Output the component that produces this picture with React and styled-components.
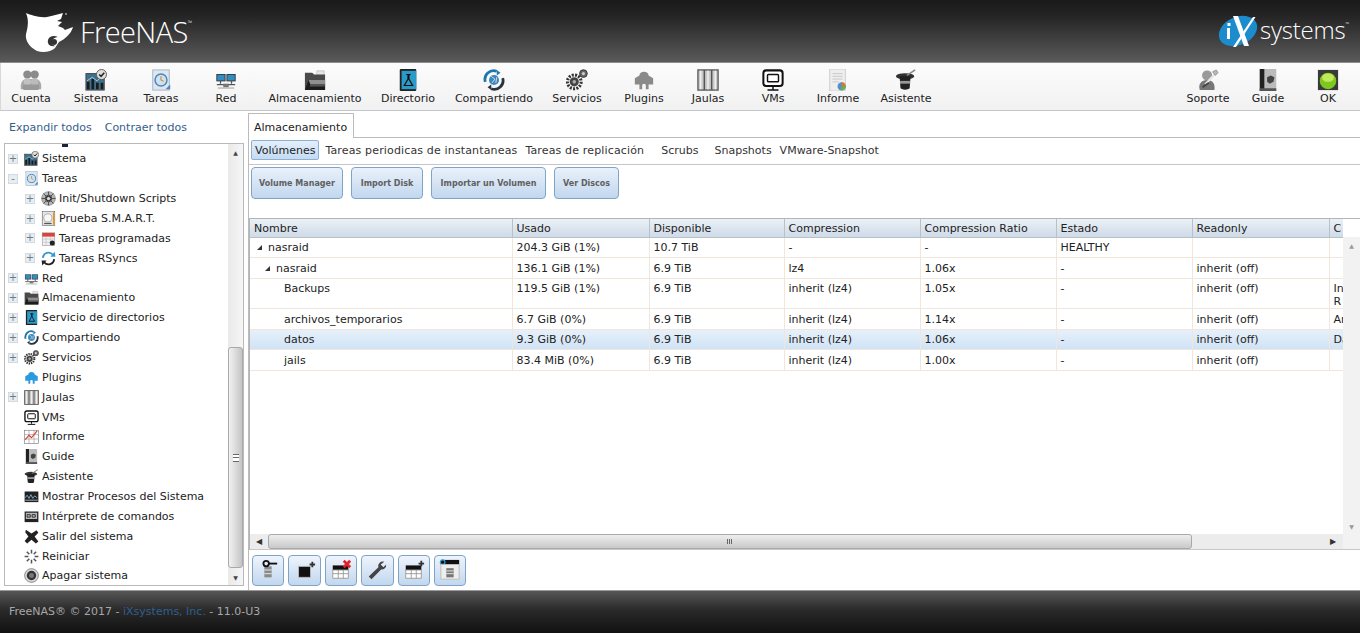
import React from "react";
import styled, { createGlobalStyle } from "styled-components";

const GlobalStyle = createGlobalStyle`
  html, body {
    margin: 0;
    padding: 0;
    height: 100%;
    overflow: hidden;
    background: #fff;
  }
  body {
    font-family: "DejaVu Sans", Verdana, sans-serif;
    font-size: 11px;
    color: #222;
  }
  #root { height: 100%; }
`;

// icons
const icons = {
  cuenta: (
    <>
      <circle cx="8" cy="6" r="4.5" fill="#8b8b8b" />
      <circle cx="16" cy="6" r="4.5" fill="#8b8b8b" />
      <path d="M1 22c-1-7 2-11 6-11h10c4 0 7 4 6 11z" fill="#a8a8a8" />
      <circle cx="8" cy="14" r="4" fill="#c2c2c2" />
      <circle cx="16" cy="14" r="4" fill="#bbb" />
      <rect x="3" y="17" width="18" height="6" rx="2" fill="#999" />
    </>
  ),
  sistema: (
    <>
      <rect x="1" y="5" width="20" height="18" fill="#3f6f8c" stroke="#444" />
      <path d="M2 22V14h3v8zM7 22V11h3v11zM12 22v-7h3v7zM17 22V15h3v7z" fill="#1c1c1c" />
      <path d="M2 13l6-4 5 4 7-6" stroke="#9fd3ea" fill="none" />
      <circle cx="18" cy="6" r="5.5" fill="#ddd" stroke="#555" />
      <path d="M15.5 6l2 2 3.5-4" stroke="#222" strokeWidth="1.6" fill="none" />
    </>
  ),
  tareas: (
    <>
      <rect x="3" y="1" width="18" height="22" fill="#dfe6ee" stroke="#9fb4c8" />
      <circle cx="12" cy="12" r="6.5" fill="#cfe2f2" stroke="#4f86b8" strokeWidth="1.6" />
      <path d="M12 8v4l3 1.5" stroke="#d08a2c" strokeWidth="1.2" fill="none" />
      <path d="M17 22l5-5v5z" fill="#4f86b8" />
    </>
  ),
  red: (
    <>
      <rect x="2" y="6" width="9" height="7" fill="#2f8fc4" stroke="#333" />
      <rect x="13" y="6" width="9" height="7" fill="#2f8fc4" stroke="#333" />
      <path d="M6 13v3M18 13v3M2 17h20" stroke="#555" strokeWidth="1.4" />
      <rect x="9" y="16" width="6" height="4" fill="#777" />
      <rect x="3" y="20" width="18" height="1.6" fill="#bbb" />
    </>
  ),
  almacenamiento: (
    <>
      <path d="M14 2h8v5h-8z" fill="#e6e6e6" stroke="#aaa" strokeWidth=".6" />
      <path d="M1 4h8l2 2h12v17H1z" fill="#4a4a4a" />
      <path d="M1 23l4-11h18v11z" fill="#1c1c1c" />
      <path d="M5 12h18v5H7z" fill="#8f8f8f" />
      <path d="M7 17h16v2H6z" fill="#555" />
    </>
  ),
  directorio: (
    <>
      <rect x="3" y="0" width="18" height="24" rx="1" fill="#222" />
      <rect x="5" y="2" width="16" height="20" fill="#2a9ac8" />
      <path d="M10 6h5M12 6v5l-4 7h9l-4-7V6" stroke="#111" strokeWidth="1.3" fill="none" />
    </>
  ),
  compartiendo: (
    <>
      <circle cx="12" cy="12" r="5.5" fill="#3f86bd" />
      <path d="M9 8l4 3-3 4M15 9l-1 6" stroke="#d8e8f2" fill="none" />
      <path d="M2.500 14A9.500 9.500 0 0 1 15 2.500" fill="none" stroke="#1b78ac" strokeWidth="3" />
      <path d="M15 1l4 3-4 3z" fill="#1b78ac" />
      <path d="M21.500 10A9.500 9.500 0 0 1 9 21.500" fill="none" stroke="#26343d" strokeWidth="3" />
      <path d="M9 23l-4-3 4-3z" fill="#26343d" />
    </>
  ),
  servicios: (
    <>
      <circle cx="9" cy="14" r="7.5" fill="none" stroke="#333" strokeWidth="3.4" strokeDasharray="2.2 1.4" />
      <circle cx="9" cy="14" r="5" fill="#444" />
      <circle cx="9" cy="14" r="2" fill="#aaa" />
      <circle cx="19" cy="5" r="4.2" fill="#666" stroke="#333" />
      <circle cx="19" cy="5" r="1.7" fill="#ccc" />
    </>
  ),
  plugins: (
    <path d="M7 7a5 4 0 0 1 10 0l5 3v7h-5v5h-3v-4a2 2 0 0 0-4 0v4H7v-5H2v-7z" fill="currentColor" />
  ),
  jaulas: (
    <>
      <rect x="1" y="1" width="22" height="22" fill="#c9c9c9" stroke="#555" strokeWidth="1.4" />
      <path d="M8 1v22M16 1v22" stroke="#555" strokeWidth="1.6" />
      <path d="M4 2v20M12 2v20M20 2v20" stroke="#efefef" strokeWidth="1.6" />
    </>
  ),
  vms: (
    <>
      <rect x="1.5" y="1.5" width="21" height="17" rx="3" fill="#fff" stroke="#111" strokeWidth="2.2" />
      <rect x="6" y="6" width="12" height="8" rx="1" fill="#fff" stroke="#111" strokeWidth="1.6" />
      <path d="M12 19v3M6 23h12" stroke="#111" strokeWidth="1.6" />
    </>
  ),
  informe: (
    <>
      <rect x="3" y="0" width="17" height="24" fill="#eeeeee" stroke="#ccc" />
      <path d="M6 5h11M6 8h11M6 11h11M6 14h7" stroke="#c7c7c7" />
      <circle cx="16" cy="19" r="4.5" fill="#4f92c8" />
      <path d="M16 19v-4.5a4.5 4.5 0 0 1 4.5 4.5z" fill="#e0782a" />
      <path d="M16 19h4.5a4.5 4.5 0 0 1-6 4z" fill="#6bb04a" />
    </>
  ),
  informeTree: (
    <>
      <rect x="1" y="2" width="22" height="21" fill="#fff" stroke="#777" />
      <path d="M1 9h22M1 16h22M8 2v21M16 2v21" stroke="#999" />
      <path d="M2 17l6-7 4 4 9-11" stroke="#d8362c" strokeWidth="1.8" fill="none" />
    </>
  ),
  asistente: (
    <>
      <ellipse cx="11" cy="8" rx="10" ry="3.500" fill="#333" />
      <path d="M5 8h12l-1 13c-2 2-8 2-10 0z" fill="#222" />
      <rect x="5.500" y="13" width="11" height="3" fill="#999" />
      <path d="M13 7l9-6" stroke="#888" strokeWidth="1.800" />
    </>
  ),
  soporte: (
    <>
      <circle cx="11" cy="7" r="5.500" fill="#9a9a9a" />
      <path d="M3 23c-2-7 2-11 8-11s9 4 8 11z" fill="#777" />
      <path d="M9 17l11-12" stroke="#e6e6e6" strokeWidth="2.400" />
      <path d="M17 3l4-2 2 3-3 3z" fill="#bbb" stroke="#666" strokeWidth=".6" />
      <path d="M6 20l7-5" stroke="#444" strokeWidth="2" />
    </>
  ),
  guide: (
    <>
      <rect x="3" y="0" width="18" height="24" fill="#bbb" />
      <rect x="3" y="0" width="5" height="24" fill="#222" />
      <rect x="3" y="21" width="18" height="3" fill="#555" />
      <path d="M11 9l4-2 4 2-1 5-4 2-3-2z" fill="#444" />
    </>
  ),
  ok: (
    <>
      <rect x="1" y="1" width="22" height="22" fill="#3a3a3a" />
      <circle cx="12" cy="13" r="9" fill="#7cc820" />
      <ellipse cx="12" cy="9.500" rx="6.500" ry="4.500" fill="#c0ea5c" />
    </>
  ),
  init: (
    <>
      <circle cx="12" cy="12" r="11" fill="#b5b5b5" stroke="#777" />
      <circle cx="12" cy="12" r="5.500" fill="#333" />
      <path d="M12 1v22M1 12h22M4 4l16 16M20 4L4 20" stroke="#555" strokeWidth="1.600" />
      <circle cx="12" cy="12" r="2.500" fill="#ddd" />
    </>
  ),
  smart: (
    <>
      <rect x="2" y="1" width="20" height="22" fill="#e8e8e8" stroke="#666" />
      <circle cx="11" cy="11" r="6.500" fill="#f8f8f8" stroke="#888" />
      <rect x="19" y="2" width="3" height="20" fill="#d99a3c" />
      <rect x="5" y="19" width="12" height="2" fill="#555" />
    </>
  ),
  programadas: (
    <>
      <rect x="2" y="3" width="20" height="20" fill="#f2f2f2" stroke="#999" />
      <rect x="2" y="3" width="20" height="6" fill="#d8453a" />
      <path d="M2 13h20M2 18h20M8 9v14M15 9v14" stroke="#bbb" />
      <circle cx="18" cy="19" r="4" fill="#222" />
    </>
  ),
  rsync: (
    <>
      <path d="M3 11A9 9 0 0 1 19 6" fill="none" stroke="#2f9ad6" strokeWidth="3" />
      <path d="M15 9l8 0-1-8z" fill="#2f9ad6" />
      <path d="M21 13A9 9 0 0 1 5 18" fill="none" stroke="#222" strokeWidth="3" />
      <path d="M9 15l-8 0 1 8z" fill="#222" />
    </>
  ),
  procesos: (
    <>
      <rect x="1" y="4" width="22" height="17" fill="#222" />
      <path d="M2 14l3-4 3 5 3-6 3 6 3-4 4 3" stroke="#7fb8d8" strokeWidth="1.400" fill="none" />
      <rect x="2" y="17" width="20" height="2" fill="#888" />
    </>
  ),
  shell: (
    <>
      <rect x="1" y="4" width="22" height="17" fill="#222" />
      <rect x="3" y="6" width="18" height="10" fill="#bbb" />
      <path d="M5 9h5v4H5zM13 9h5v4h-5z" fill="none" stroke="#222" strokeWidth="1.400" />
    </>
  ),
  salir: (
    <path d="M3 1l9 6 8-5 3 4-6 6 6 8-4 3-7-6-7 6-4-4 6-7-5-7z" fill="#222" />
  ),
  reiniciar: (
    <g stroke="#555" strokeWidth="2.400">
      <path d="M12 1v6M12 17v6M1 12h6M17 12h6M4.500 4.500l4 4M15.500 15.500l4 4M19.500 4.500l-4 4M8.500 15.500l-4 4" />
    </g>
  ),
  apagar: (
    <>
      <circle cx="12" cy="12" r="11" fill="#d8d8d8" stroke="#555" />
      <circle cx="12" cy="12" r="7.500" fill="#333" />
      <circle cx="12" cy="12" r="4" fill="#777" />
    </>
  ),
};

const Icon = ({ name, size = 22, color }) => (
  <svg width={size} height={size} viewBox="0 0 24 24" color={color}>
    {icons[name]}
  </svg>
);

// small icons in the bottom button row
const actionIcons = [
  <>
    <path d="M8 8h8v12H8z" fill="#8a8a8a" />
    <path d="M8 12h8M8 16h8" stroke="#eee" />
    <circle cx="10" cy="5" r="3" fill="none" stroke="#111" strokeWidth="2" />
    <path d="M13 5h9" stroke="#111" strokeWidth="2" />
  </>,
  <>
    <rect x="5" y="8" width="13" height="12" fill="#111" stroke="#bbb" />
    <path d="M17 6h6M20 3v6" stroke="#333" strokeWidth="2" />
  </>,
  <>
    <rect x="3" y="7" width="17" height="5" fill="#111" />
    <path d="M3 12h17v9H3zM3 16h17M9 12v9M14.500 12v9" fill="#fff" stroke="#999" />
    <path d="M15 2l7 7M22 2l-7 7" stroke="#e0202a" strokeWidth="3" />
  </>,
  <path d="M20 3a5 5 0 0 0-6.500 6L3 19l3 3 10.500-10.500A5 5 0 0 0 22 6l-3 3-3-3z" fill="#444" />,
  <>
    <rect x="3" y="7" width="17" height="5" fill="#111" />
    <path d="M3 12h17v9H3zM3 16h17M9 12v9M14.500 12v9" fill="#fff" stroke="#999" />
    <path d="M17 5h6M20 2v6" stroke="#333" strokeWidth="2" />
  </>,
  <>
    <rect x="2" y="1" width="20" height="5" fill="#111" />
    <circle cx="4" cy="3.500" r="2.500" fill="none" stroke="#2f9ad6" strokeWidth="1.400" />
    <path d="M2 6h20v16H2z" fill="#eee" stroke="#bbb" />
    <path d="M8 10h8v10H8z" fill="#777" />
    <path d="M8 13h8M8 16h8" stroke="#eee" />
  </>,
];

const FreeNasLogo = () => (
  <svg width="49" height="41" viewBox="0 0 49 41">
    <path
      fill="#fff"
      d="M1 1C6 3 14 6 22 5c6-1 11-3 16-4l-2 6-4 2 5 1-4 4 5 2 2 2 8-3c-2 7-8 12-14 15l-4 6c-4 4-12 5-18 3C4 35 0 28 1 22 3 15 4 8 1 1z"
    />
    <path fill="#343434" d="M33 25c-4-2-9-1-10 3-1 4 2 7 7 6-3-1-4-3-3-5 1-3 4-4 6-4z" />
    <circle cx="29" cy="30" r="3" fill="#343434" />
    <circle cx="41" cy="2" r="1" fill="#aaa" />
  </svg>
);

const IxLogo = () => (
  <svg width="40" height="34" viewBox="0 0 40 34">
    <ellipse cx="20" cy="17" rx="20" ry="14" fill="#1c8ccd" transform="rotate(-24 20 17)" />
    <path d="M15 2h5l11 30h-5z" fill="#fff" />
    <path d="M35 3h2.500L18 33h-3z" fill="#fff" />
    <path d="M9 14h3v11H9zM9.500 9h3v3h-3z" fill="#fff" />
  </svg>
);

// toolbar data, the widths are what the original buttons measure
const leftTools = [
  ["cuenta", "Cuenta", 65],
  ["sistema", "Sistema", 65],
  ["tareas", "Tareas", 65],
  ["red", "Red", 65],
  ["almacenamiento", "Almacenamiento", 113],
  ["directorio", "Directorio", 73],
  ["compartiendo", "Compartiendo", 99],
  ["servicios", "Servicios", 67],
  ["plugins", "Plugins", 67],
  ["jaulas", "Jaulas", 61],
  ["vms", "VMs", 69],
  ["informe", "Informe", 61],
  ["asistente", "Asistente", 75],
];

const rightTools = [
  ["soporte", "Soporte", 60],
  ["guide", "Guide", 60],
  ["ok", "OK", 60],
];

const treeRows = [
  { icon: "sistema", label: "Sistema", exp: "+" },
  { icon: "tareas", label: "Tareas", exp: "-" },
  { icon: "init", label: "Init/Shutdown Scripts", exp: "+", sub: true },
  { icon: "smart", label: "Prueba S.M.A.R.T.", exp: "+", sub: true },
  { icon: "programadas", label: "Tareas programadas", exp: "+", sub: true },
  { icon: "rsync", label: "Tareas RSyncs", exp: "+", sub: true },
  { icon: "red", label: "Red", exp: "+" },
  { icon: "almacenamiento", label: "Almacenamiento", exp: "+" },
  { icon: "directorio", label: "Servicio de directorios", exp: "+" },
  { icon: "compartiendo", label: "Compartiendo", exp: "+" },
  { icon: "servicios", label: "Servicios", exp: "+" },
  { icon: "plugins", label: "Plugins", color: "#2a9ae0" },
  { icon: "jaulas", label: "Jaulas", exp: "+" },
  { icon: "vms", label: "VMs" },
  { icon: "informeTree", label: "Informe" },
  { icon: "guide", label: "Guide" },
  { icon: "asistente", label: "Asistente" },
  { icon: "procesos", label: "Mostrar Procesos del Sistema" },
  { icon: "shell", label: "Intérprete de comandos" },
  { icon: "salir", label: "Salir del sistema" },
  { icon: "reiniciar", label: "Reiniciar" },
  { icon: "apagar", label: "Apagar sistema" },
];

const subTabs = [
  { label: "Tareas periodicas de instantaneas", gap: 8, wide: true },
  { label: "Tareas de replicación", gap: 17, wide: true },
  { label: "Scrubs", gap: 16 },
  { label: "Snapshots", gap: 8 },
  { label: "VMware-Snapshot", gap: 0 },
];

const actionButtons = [
  ["Volume Manager", 92],
  ["Import Disk", 72],
  ["Importar un Volumen", 115],
  ["Ver Discos", 65],
];

const columns = [
  ["Nombre", 262],
  ["Usado", 137],
  ["Disponible", 135],
  ["Compression", 136],
  ["Compression Ratio", 136],
  ["Estado", 136],
  ["Readonly", 137],
  ["C", 14],
];

const volumes = [
  { h: 20, depth: 0, arrow: true, cells: ["nasraid", "204.3 GiB (1%)", "10.7 TiB", "-", "-", "HEALTHY", "", ""] },
  { h: 21, depth: 1, arrow: true, cells: ["nasraid", "136.1 GiB (1%)", "6.9 TiB", "lz4", "1.06x", "-", "inherit (off)", ""] },
  { h: 30, depth: 2, cells: ["Backups", "119.5 GiB (1%)", "6.9 TiB", "inherit (lz4)", "1.05x", "-", "inherit (off)", "In R"] },
  { h: 21, depth: 2, cells: ["archivos_temporarios", "6.7 GiB (0%)", "6.9 TiB", "inherit (lz4)", "1.14x", "-", "inherit (off)", "Ar"] },
  { h: 20, depth: 2, selected: true, cells: ["datos", "9.3 GiB (0%)", "6.9 TiB", "inherit (lz4)", "1.06x", "-", "inherit (off)", "Da"] },
  { h: 21, depth: 2, cells: ["jails", "83.4 MiB (0%)", "6.9 TiB", "inherit (lz4)", "1.00x", "-", "inherit (off)", ""] },
];

const App = () => (
  <Page>
    <GlobalStyle />
    <Header>
      <LogoWrap>
        <FreeNasLogo />
        <LogoText>
          FreeNAS<sup>™</sup>
        </LogoText>
      </LogoWrap>
      <IxWrap>
        <IxLogo />
        <IxText>
          systems<sup>™</sup>
        </IxText>
      </IxWrap>
    </Header>

    <Toolbar>
      <ToolGroup>
        {leftTools.map(([icon, label, width]) => (
          <ToolButton key={label} $w={width}>
            <Icon name={icon} color={icon === "plugins" ? "#8a8a8a" : undefined} />
            <span>{label}</span>
          </ToolButton>
        ))}
      </ToolGroup>
      <ToolGroup>
        {rightTools.map(([icon, label, width]) => (
          <ToolButton key={label} $w={width}>
            <Icon name={icon} />
            <span>{label}</span>
          </ToolButton>
        ))}
      </ToolGroup>
    </Toolbar>

    <Main>
      <Sidebar>
        <ExpandLinks>
          <a>Expandir todos</a>
          <a>Contraer todos</a>
        </ExpandLinks>
        <TreeBox>
          <TreeList>
            <ScrolledOff />
            {treeRows.map((row) => (
              <TreeRow key={row.label} $sub={row.sub}>
                <Expander $hidden={!row.exp}>{row.exp}</Expander>
                <Icon name={row.icon} size={15} color={row.color} />
                <span>{row.label}</span>
              </TreeRow>
            ))}
          </TreeList>
          <VScroll>
            <ArrowBtn>▲</ArrowBtn>
            <VTrack>
              <VThumb>
                <Grip />
              </VThumb>
            </VTrack>
            <ArrowBtn>▼</ArrowBtn>
          </VScroll>
        </TreeBox>
      </Sidebar>

      <Content>
        <TabStrip>
          <Tab>Almacenamiento</Tab>
        </TabStrip>
        <Panel>
          <SubTabs>
            <SubTabActive>Volúmenes</SubTabActive>
            {subTabs.map((t) => (
              <SubTab key={t.label} $gap={t.gap} $wide={t.wide}>
                {t.label}
              </SubTab>
            ))}
          </SubTabs>
          <Actions>
            {actionButtons.map(([label, width]) => (
              <ActionButton key={label} $w={width}>
                {label}
              </ActionButton>
            ))}
          </Actions>
          <GridWrap>
            <GridTop>
              <GridBody>
                <GridTable>
                  <colgroup>
                    {columns.map(([name, w]) => (
                      <col key={name} width={w} />
                    ))}
                  </colgroup>
                  <thead>
                    <tr>
                      {columns.map(([name]) => (
                        <Th key={name}>{name}</Th>
                      ))}
                    </tr>
                  </thead>
                  <tbody>
                    {volumes.map((v) => (
                      <Tr key={v.cells[0] + v.cells[1]} $selected={v.selected} $h={v.h}>
                        {v.cells.map((c, i) => (
                          <Td key={i}>
                            {i === 0 ? (
                              <NameCell $depth={v.depth}>
                                {v.arrow && <TreeArrow />}
                                {c}
                              </NameCell>
                            ) : (
                              c
                            )}
                          </Td>
                        ))}
                      </Tr>
                    ))}
                  </tbody>
                </GridTable>
              </GridBody>
              <GridVScroll>
                <ScrollCap />
                <ArrowBtn $faint>▲</ArrowBtn>
                <ScrollFill />
                <ArrowBtn $faint>▼</ArrowBtn>
              </GridVScroll>
            </GridTop>
            <HScroll>
              <HArrow $w={18}>◀</HArrow>
              <HThumb>
                <HGrip />
              </HThumb>
              <HFill />
              <HArrow $w={20}>▶</HArrow>
              <ScrollCorner />
            </HScroll>
          </GridWrap>
          <BottomBar>
            {actionIcons.map((ico, i) => (
              <IconButton key={i}>
                <svg width="22" height="22" viewBox="0 0 24 24">
                  {ico}
                </svg>
              </IconButton>
            ))}
          </BottomBar>
        </Panel>
      </Content>
    </Main>

    <Footer>
      FreeNAS® © 2017 - <FooterLink>iXsystems, Inc.</FooterLink> - 11.0-U3
    </Footer>
  </Page>
);

export default App;

//styles

const Page = styled.div`
  display: flex;
  flex-direction: column;
  height: 633px;
  overflow: hidden;
`;

const Header = styled.header`
  height: 62px;
  flex: none;
  display: flex;
  align-items: flex-start;
  justify-content: space-between;
  background: linear-gradient(#1a1a1a, #242424 25%, #5a5a5a);
  border-bottom: 1px solid #8d8d8d;
`;

const LogoWrap = styled.div`
  display: flex;
  align-items: center;
  gap: 6px;
  margin: 12px 0 0 25px;
  color: #fff;
`;

const LogoText = styled.div`
  font-family: "Open Sans", "Liberation Sans", sans-serif;
  font-size: 29px;
  font-weight: 300;
  letter-spacing: -0.6px;
  margin-top: -2px;
  sup {
    font-size: 6px;
    vertical-align: 18px;
    line-height: 0;
    letter-spacing: 0;
  }
`;

const IxWrap = styled.div`
  display: flex;
  align-items: center;
  gap: 2px;
  margin: 14px 11px 0 0;
  color: #fff;
`;

const IxText = styled.div`
  font-family: "Open Sans", "Liberation Sans", sans-serif;
  font-size: 24px;
  font-weight: 300;
  letter-spacing: -0.2px;
  margin-top: -4px;
  sup {
    font-size: 5px;
    vertical-align: 13px;
    line-height: 0;
  }
`;

const Toolbar = styled.nav`
  height: 47px;
  flex: none;
  display: flex;
  justify-content: space-between;
  background: linear-gradient(#fcfcfc, #f1f1f1);
  border-bottom: 1px solid #c2c8cc;
  border-left: 1px solid #d8d8d8;
`;

const ToolGroup = styled.div`
  display: flex;
  margin-left: -2.5px;
  margin-right: 2px;
`;

const ToolButton = styled.div`
  display: flex;
  flex-direction: column;
  align-items: center;
  box-sizing: border-box;
  width: ${(props) => props.$w}px;
  padding-top: 6px;
  span {
    margin-top: 1px;
    line-height: 13px;
    white-space: nowrap;
    color: #222;
  }
`;

const Main = styled.main`
  flex: 1;
  min-height: 0;
  display: flex;
`;

const Sidebar = styled.aside`
  width: 248px;
  flex: none;
  display: flex;
  flex-direction: column;
  padding: 0 4px 4px;
  box-sizing: border-box;
`;

const ExpandLinks = styled.div`
  height: 32px;
  flex: none;
  display: flex;
  gap: 13px;
  align-items: center;
  padding: 0 0 0 5px;
  a {
    color: #34618a;
  }
`;

const TreeBox = styled.div`
  flex: 1;
  min-height: 0;
  display: flex;
  border: 1px solid #b9b9b9;
  background: #fff;
`;

const TreeList = styled.div`
  flex: 1;
  min-width: 0;
  overflow: hidden;
  padding-left: 3px;
`;

const ScrolledOff = styled.div`
  width: 6px;
  height: 3px;
  margin-left: 54px;
  margin-bottom: 2px;
  background: #1a2238;
`;

const TreeRow = styled.div`
  height: 19.86px;
  display: flex;
  align-items: center;
  padding-left: ${(props) => (props.$sub ? 17 : 0)}px;
  white-space: nowrap;
  color: #222;
  svg {
    margin: 0 3px 0 6px;
    flex: none;
  }
`;

const Expander = styled.span`
  width: 10px;
  height: 10px;
  flex: none;
  box-sizing: border-box;
  display: flex;
  align-items: center;
  justify-content: center;
  border: 1px solid #d3dae0;
  background: #e8edf1;
  color: #6e7a86;
  font-size: 10px;
  line-height: 1;
  visibility: ${(props) => (props.$hidden ? "hidden" : "visible")};
`;

const VScroll = styled.div`
  width: 15px;
  flex: none;
  display: flex;
  flex-direction: column;
  background: linear-gradient(90deg, #e9e9e9, #f6f6f6);
`;

const ArrowBtn = styled.div`
  height: 16px;
  flex: none;
  display: flex;
  align-items: center;
  justify-content: center;
  font-size: 6px;
  color: ${(props) => (props.$faint ? "#999" : "#444")};
`;

const VTrack = styled.div`
  flex: 1;
  min-height: 0;
  padding-top: 187px;
  display: flex;
  flex-direction: column;
  box-sizing: border-box;
`;

const VThumb = styled.div`
  height: 221px;
  box-sizing: border-box;
  display: flex;
  align-items: center;
  justify-content: center;
  background: linear-gradient(90deg, #f2f2f2, #c4c4c4);
  border: 1px solid #a9a9a9;
  border-radius: 3px;
`;

const Grip = styled.div`
  width: 6px;
  height: 6px;
  border-top: 1px solid #666;
  border-bottom: 1px solid #666;
  background: linear-gradient(#fff 0 2px, #666 2px 3px, #fff 3px);
`;

const Content = styled.section`
  flex: 1;
  min-width: 0;
  display: flex;
  flex-direction: column;
`;

const TabStrip = styled.div`
  height: 26px;
  flex: none;
  display: flex;
  align-items: flex-end;
  border-bottom: 1px solid #bbb;
`;

const Tab = styled.div`
  height: 25px;
  margin-bottom: -1px;
  padding: 3px 6px 0 5px;
  display: flex;
  align-items: center;
  box-sizing: border-box;
  background: #fff;
  border: 1px solid #bbb;
  border-bottom: none;
  color: #222;
`;

const Panel = styled.div`
  flex: 1;
  min-height: 0;
  display: flex;
  flex-direction: column;
  border-left: 1px solid #bbb;
`;

const SubTabs = styled.div`
  height: 27px;
  flex: none;
  display: flex;
  align-items: flex-start;
  padding: 2px 0 0 2px;
  border-bottom: 1px solid #c6c6c6;
  box-sizing: border-box;
`;

const SubTabActive = styled.div`
  height: 20px;
  padding: 0 3px;
  display: flex;
  align-items: center;
  box-sizing: border-box;
  background: linear-gradient(#e3eefb, #c4dbf4);
  border: 1px solid #8fb0cf;
  border-radius: 2px;
  margin-right: 6px;
`;

const SubTab = styled.div`
  height: 20px;
  display: flex;
  align-items: center;
  margin-right: ${(props) => props.$gap}px;
  letter-spacing: ${(props) => (props.$wide ? "0.15px" : "0")};
  color: #333;
  white-space: nowrap;
`;

const Actions = styled.div`
  height: 53px;
  flex: none;
  display: flex;
  align-items: flex-start;
  gap: 8px;
  padding: 2px 0 0 2px;
  box-sizing: border-box;
`;

const ActionButton = styled.button`
  width: ${(props) => props.$w}px;
  height: 32px;
  padding: 0;
  font-family: "DejaVu Sans", Verdana, sans-serif;
  font-size: 8px;
  font-weight: bold;
  color: #606060;
  border: 1px solid #7ea4c8;
  border-radius: 4px;
  background: linear-gradient(#e9f1fb, #c2d7ee);
`;

const GridWrap = styled.div`
  flex: 1;
  min-height: 0;
  display: flex;
  flex-direction: column;
  border-top: 1px solid #b5b5b5;
  border-left: 1px solid #b5b5b5;
`;

const GridTop = styled.div`
  flex: 1;
  min-height: 0;
  display: flex;
`;

const GridBody = styled.div`
  flex: 1;
  min-width: 0;
  overflow: hidden;
`;

const GridTable = styled.table`
  table-layout: fixed;
  width: 1093px;
  border-collapse: collapse;
`;

const Th = styled.th`
  height: 18px;
  padding: 2px 4px 0;
  text-align: left;
  font-weight: normal;
  color: #222;
  white-space: nowrap;
  overflow: hidden;
  background: linear-gradient(#ebf0f6, #cfdbe8);
  border-right: 1px solid #b8c0c8;
  border-bottom: 1px solid #b8c0c8;
  box-sizing: border-box;
`;

const Tr = styled.tr`
  height: ${(props) => props.$h}px;
  background: ${(props) => (props.$selected ? "linear-gradient(#e8f1fa, #cfe3f6)" : "#fff")};
  td {
    padding-top: ${(props) => (props.$h === 21 ? 4 : 3)}px;
  }
`;

const Td = styled.td`
  padding: 3px 4px 0;
  vertical-align: top;
  color: #222;
  line-height: 13px;
  overflow: hidden;
  border-right: 1px solid #f0e6dc;
  border-bottom: 1px solid #f0e6dc;
  box-sizing: border-box;
`;

const NameCell = styled.div`
  display: flex;
  align-items: center;
  padding-left: ${(props) => [3, 11, 30][props.$depth]}px;
  white-space: nowrap;
`;

const TreeArrow = styled.span`
  width: 0;
  height: 0;
  margin-right: 6px;
  border-style: solid;
  border-width: 0 0 5px 5px;
  border-color: transparent transparent #333 transparent;
`;

const GridVScroll = styled.div`
  width: 17px;
  flex: none;
  display: flex;
  flex-direction: column;
  background: #f2f2f2;
`;

const ScrollCap = styled.div`
  height: 18px;
  flex: none;
  background: #fff;
`;

const ScrollFill = styled.div`
  flex: 1;
`;

const HScroll = styled.div`
  height: 15px;
  flex: none;
  display: flex;
  align-items: stretch;
  background: #ececec;
  border-bottom: 1px solid #c8c8c8;
`;

const HArrow = styled.div`
  width: ${(props) => props.$w}px;
  flex: none;
  display: flex;
  align-items: center;
  justify-content: center;
  font-size: 8px;
  color: #333;
`;

const HFill = styled.div`
  flex: 1;
`;

const ScrollCorner = styled.div`
  width: 17px;
  flex: none;
  background: #f2f2f2;
`;

const HThumb = styled.div`
  width: 924px;
  flex: none;
  display: flex;
  align-items: center;
  justify-content: center;
  box-sizing: border-box;
  background: linear-gradient(#eeeeee, #c9c9c9);
  border: 1px solid #a9a9a9;
  border-radius: 3px;
`;

const HGrip = styled.div`
  width: 6px;
  height: 5px;
  background: repeating-linear-gradient(90deg, #666 0 1px, transparent 1px 2px);
`;

const BottomBar = styled.div`
  height: 40px;
  flex: none;
  display: flex;
  gap: 4px;
  align-items: center;
  padding-left: 3px;
`;

const IconButton = styled.button`
  width: 32.4px;
  height: 31px;
  padding: 0;
  display: flex;
  align-items: center;
  justify-content: center;
  border: 1px solid #7ea4c8;
  border-radius: 4px;
  background: linear-gradient(#eef4fc, #c2d7ee);
`;

const Footer = styled.footer`
  height: 43px;
  flex: none;
  box-sizing: border-box;
  padding: 14px 0 0 9px;
  color: #a8a8a8;
  line-height: 13px;
  background: linear-gradient(#565656, #2a2a2a 45%, #111);
  border-top: 1px solid #9a9a9a;
`;

const FooterLink = styled.span`
  color: #2f5f8f;
`;
